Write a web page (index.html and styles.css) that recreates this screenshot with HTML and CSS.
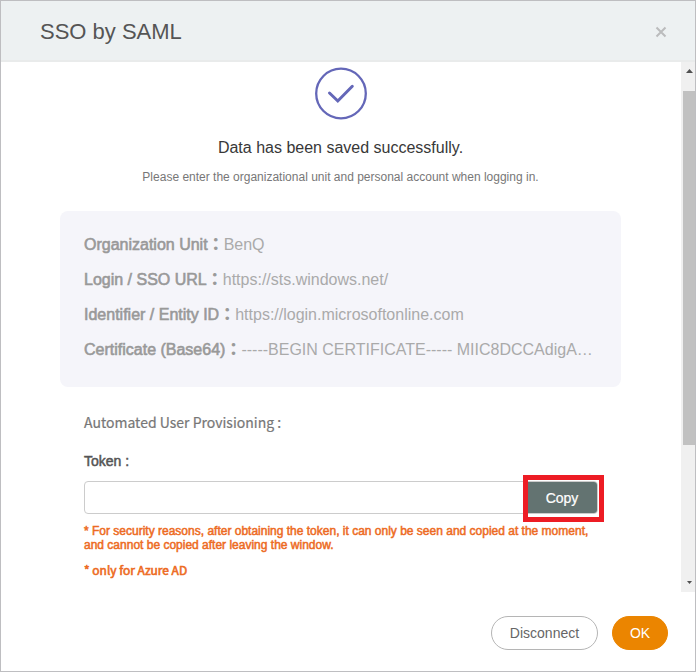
FILE: index.html
```html
<!DOCTYPE html>
<html lang="en">
<head>
<meta charset="utf-8">
<title>SSO by SAML</title>
<link rel="stylesheet" href="styles.css">
</head>
<body>
<div class="dialog">
  <header class="header">
    <h1 class="title">SSO by SAML</h1>
    <svg class="close" width="12" height="12" viewBox="0 0 12 12"><path d="M1.5 1.5l9 9M10.5 1.5l-9 9"/></svg>
  </header>
  <div class="body">
    <main class="content">
      <svg class="check" width="52" height="52" viewBox="0 0 52 52"><circle cx="26" cy="26.5" r="24.8"/><path class="tick" d="M14.5 26L22.8 34L37.3 19.3"/></svg>
      <p class="success">Data has been saved successfully.</p>
      <p class="hint">Please enter the organizational unit and personal account when logging in.</p>
      <section class="info">
        <p class="row"><b class="label">Organization Unit<span class="colon">：</span></b>BenQ</p>
        <p class="row"><b class="label">Login / SSO URL<span class="colon">：</span></b>https://sts.windows.net/</p>
        <p class="row"><b class="label">Identifier / Entity ID<span class="colon">：</span></b>https://login.microsoftonline.com</p>
        <p class="row"><b class="label">Certificate (Base64)<span class="colon">：</span></b>-----BEGIN CERTIFICATE----- MIIC8DCCAdigA…</p>
      </section>
      <section class="provision">
        <h2 class="subtitle">Automated User Provisioning :</h2>
        <label class="token-label" for="token">Token :</label>
        <div class="token">
          <input class="token-input" id="token" type="text">
          <button class="copy">Copy</button>
          <span class="highlight"></span>
        </div>
        <p class="note">* For security reasons, after obtaining the token, it can only be seen and copied at the moment,<br>and cannot be copied after leaving the window.</p>
        <p class="note azure">* only for Azure AD</p>
      </section>
    </main>
    <div class="scrollbar">
      <svg class="arrow" width="7" height="4" viewBox="0 0 7 4"><path d="M0 4L3.5 0L7 4z"/></svg>
      <div class="thumb"></div>
      <svg class="arrow down" width="5" height="3" viewBox="0 0 5 3"><path d="M0 0h5L2.5 3z"/></svg>
    </div>
  </div>
  <footer class="footer">
    <button class="btn">Disconnect</button>
    <button class="btn ok">OK</button>
  </footer>
</div>
</body>
</html>
```

FILE: styles.css
```css
* { box-sizing: border-box; }
body, h1, h2, p { margin: 0; font-weight: 400; }
body { font-family: "Liberation Sans", "Noto Sans CJK TC", sans-serif; background: #fff; }
button, input { font-family: inherit; padding: 0; margin: 0; }
.dialog { width: 696px; height: 672px; border: 1px solid #bebec1; display: flex; flex-direction: column; overflow: hidden; }
.header { height: 61px; flex: none; background: #edf1f2; border-bottom: 2px solid #e9ebeb; display: flex; align-items: center; justify-content: space-between; padding: 2px 28px 0 39px; }
.title { font-size: 22px; line-height: 30px; color: #555; }
.close { fill: none; stroke: #bbbcbd; stroke-width: 2; }
.body { height: 530px; flex: none; display: flex; }
.content { width: 680px; padding: 5px 60px 0 59px; display: flex; flex-direction: column; align-items: center; }
.check { flex: none; fill: none; stroke: #6467b8; stroke-width: 2.3; overflow: visible; }
.tick { stroke-width: 3; stroke-linecap: round; }
.success { margin-top: 17px; font-size: 16px; line-height: 24px; color: #383838; }
.hint { margin-top: 7px; font-size: 12px; line-height: 20px; color: #777; }
.info { width: 561px; height: 176px; margin-top: 24px; padding: 16px 24px; background: #f5f5fa; border-radius: 8px; }
.row { height: 35px; font-size: 16px; line-height: 35px; color: #aaa; white-space: nowrap; }
.label { font-weight: 400; color: #999; -webkit-text-stroke: .6px #999; }
.colon { -webkit-text-stroke: 1px #999; }
.provision { width: 561px; padding: 23px 17px 0 24px; }
.subtitle { font-family: "Noto Sans CJK TC", sans-serif; font-size: 14px; line-height: 24px; color: #777; -webkit-text-stroke: .2px #777; }
.token-label { display: block; margin-top: 17px; font-size: 14px; line-height: 20px; color: #555; -webkit-text-stroke: .5px #555; }
.token { position: relative; display: flex; width: 514px; height: 33px; margin-top: 10px; border: 1px solid #ccc; border-radius: 4px; }
.token-input { flex: 1; min-width: 0; border: 0; background: transparent; outline: 0; }
.copy { width: 72px; padding-left: 2px; border: 0; border-radius: 0 3px 3px 0; background: #637371; color: #fff; font-size: 14px; -webkit-text-stroke: .2px #fff; }
.highlight { position: absolute; left: 438px; top: -7px; width: 81px; height: 47px; border: 5px solid #ed1c24; }
.note { margin-top: 10px; font-size: 12px; line-height: 14px; color: #ed6b23; -webkit-text-stroke: .5px #ed6b23; white-space: nowrap; }
.azure { margin-top: 11px; font-family: "Noto Sans CJK TC", sans-serif; -webkit-text-stroke-width: .6px; }
.scrollbar { width: 14px; background: #f0f0f0; display: flex; flex-direction: column; align-items: flex-end; padding-top: 7px; }
.arrow { flex: none; fill: #505050; margin-right: 2px; }
.thumb { width: 12px; height: 354px; margin-top: 18px; background: #c1c1c1; }
.down { margin: 136px 3px 0 0; }
.footer { display: flex; justify-content: flex-end; gap: 14px; padding: 24px 27px 0 0; }
.btn { width: 107px; height: 34px; border: 1px solid #b5b5b5; border-radius: 17px; background: #fff; color: #666; font-size: 14px; }
.ok { width: 56px; border-color: #eb8500; background: #eb8500; color: #fff; }
```
